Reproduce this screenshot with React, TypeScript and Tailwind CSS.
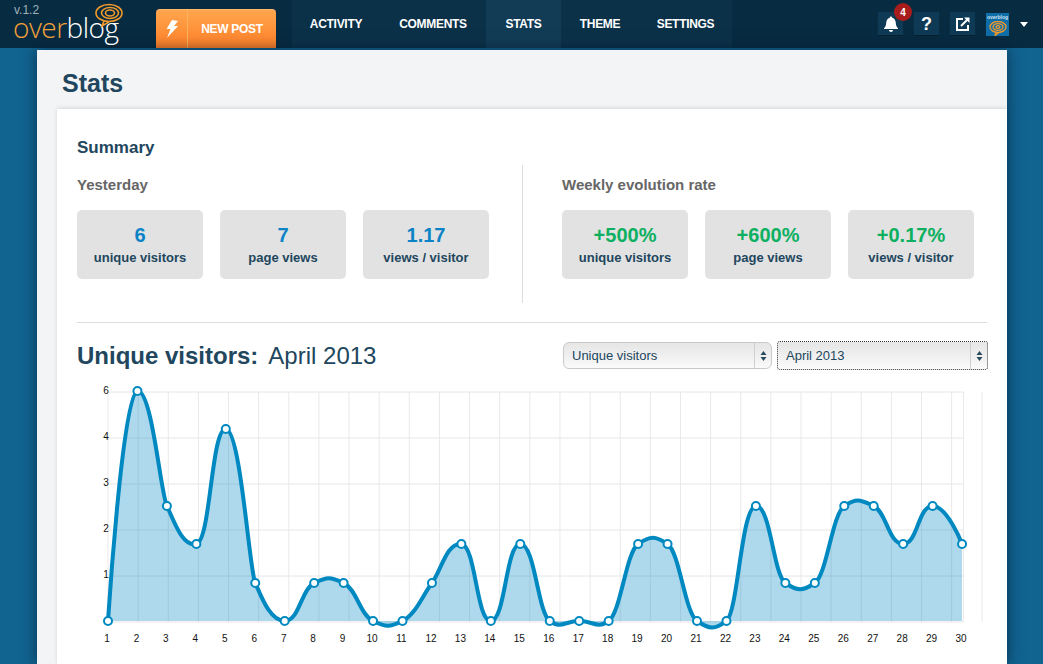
import React from "react";

const font = { fontFamily: '"Liberation Sans", Arial, sans-serif' };

const ys = [622, 392, 507, 545, 430, 584, 622, 584, 584, 622, 622, 584, 545, 622, 545, 622, 622, 622, 545, 545, 622, 622, 507, 584, 584, 507, 507, 545, 507, 545];
const xs = ys.map((_, i) => 108 + i * 29.45);

function anchors(p1x: number, p1y: number, p2x: number, p2y: number, p3x: number, p3y: number) {
  const l1 = (p2x - p1x) / 2;
  const l2 = (p3x - p2x) / 2;
  let a = Math.atan((p2x - p1x) / Math.abs(p2y - p1y));
  let b = Math.atan((p3x - p2x) / Math.abs(p2y - p3y));
  a = p1y < p2y ? Math.PI - a : a;
  b = p3y < p2y ? Math.PI - b : b;
  const alpha = Math.PI / 2 - ((a + b) % (Math.PI * 2)) / 2;
  return {
    x1: p2x - l1 * Math.sin(alpha + a),
    y1: p2y + l1 * Math.cos(alpha + a),
    x2: p2x + l2 * Math.sin(alpha + b),
    y2: p2y + l2 * Math.cos(alpha + b),
  };
}

function linePath() {
  let d = `M${xs[0]} ${ys[0]} C${xs[0]} ${ys[0]}`;
  for (let i = 1; i < xs.length - 1; i++) {
    const a = anchors(xs[i - 1], ys[i - 1], xs[i], ys[i], xs[i + 1], ys[i + 1]);
    d += ` ${a.x1} ${a.y1} ${xs[i]} ${ys[i]} ${a.x2} ${a.y2}`;
  }
  const n = xs.length - 1;
  d += ` ${xs[n]} ${ys[n]} ${xs[n]} ${ys[n]}`;
  return d;
}

function Chart() {
  const d = linePath();
  const gridX: number[] = [];
  for (let i = 0; i <= 28; i++) gridX.push(108 + i * 30.13);
  gridX.push(963.5, 982);
  const gridY = [393, 439, 485, 531, 577, 623];
  const yLabels: [string, number][] = [["6", 392], ["4", 438], ["3", 484], ["2", 530], ["1", 576]];
  return (
    <svg width="950" height="280" viewBox="60 384 950 280" className="block" style={font}>
      {gridX.map((x) => (
        <line key={x} x1={x} x2={x} y1={393} y2={623} stroke="#e9e9e9" strokeWidth="1" />
      ))}
      {gridY.map((y) => (
        <line key={y} x1={108} x2={963.5} y1={y} y2={y} stroke="#e6e6e6" strokeWidth="1" />
      ))}
      <path d={`${d} L962 622 L108 622 Z`} fill="#0a8ac6" fillOpacity="0.33" />
      <path d={d} fill="none" stroke="#0088c0" strokeWidth="4" />
      {xs.map((x, i) => (
        <circle key={i} cx={x} cy={ys[i]} r="4" fill="#fff" stroke="#0088c0" strokeWidth="2" />
      ))}
      {yLabels.map(([t, y]) => (
        <text key={t} x="106" y={y + 3} fontSize="10" textAnchor="middle" fill="#111">{t}</text>
      ))}
      {xs.map((x, i) => (
        <text key={i} x={x - 1} y="643" fontSize="10" textAnchor="middle" fill="#111">{i + 1}</text>
      ))}
    </svg>
  );
}

function Logo() {
  return (
    <div className="relative w-[140px] h-12 shrink-0">
      <span className="absolute left-[14px] top-[2px] text-[12px] leading-[16px] text-[#9fb0bb]">v.1.2</span>
      <span className="absolute left-[13px] top-[13px] text-[28px] leading-[28px] tracking-[-0.5px]" style={{ fontFamily: '"Open Sans", sans-serif', fontWeight: 300 }}>
        <span className="text-[#f4a13a]">over</span>
        <span className="text-white">blog</span>
      </span>
      <svg className="absolute left-[94px] top-[2px]" width="30" height="26" viewBox="0 0 30 26" fill="none" stroke="#f09a2c" strokeWidth="1.6">
        <ellipse cx="15" cy="11" rx="13" ry="8.5" />
        <ellipse cx="16" cy="11" rx="8.5" ry="5.5" />
        <ellipse cx="16" cy="11" rx="4.5" ry="3" />
        <path d="M10 19 L8 24 L15 20" />
      </svg>
    </div>
  );
}

function IconButton({ children }: { children: React.ReactNode }) {
  return (
    <div className="w-[25px] h-[24px] flex items-center justify-center bg-[#0f3a56] border-b border-[#04202f] shadow-[0_0_0_1px_#0a2c42]">
      {children}
    </div>
  );
}

function Header() {
  const items = [
    { t: "ACTIVITY", w: "w-[88px]" },
    { t: "COMMENTS", w: "w-[106px]" },
    { t: "STATS", w: "w-[75px]", active: true },
    { t: "THEME", w: "w-[78px]" },
    { t: "SETTINGS", w: "w-[93px]" },
  ];
  return (
    <div className="h-12 bg-[#072b41] flex items-end shrink-0">
      <Logo />
      <div className="ml-4 w-[120px] h-[39px] flex rounded-t-[4px] bg-gradient-to-b from-[#ffa64d] to-[#ff7f26] border-t border-[#ffb769]">
        <div className="w-[32px] flex items-center justify-center border-r border-[#ffb25f]">
          <svg width="14" height="18" viewBox="0 0 14 18" fill="#fff">
            <path d="M7 0 L13 1 L9 6 L13 6 L2 18 L5.5 9 L1.5 9 Z" />
          </svg>
        </div>
        <div className="flex-1 flex items-center justify-center text-[12px] font-bold text-white tracking-[-0.3px]">NEW POST</div>
      </div>
      <div className="ml-[16px] h-12 flex bg-[#0b3148]">
        {items.map((it) => (
          <div key={it.t} className={`${it.w} flex items-center justify-center text-[12px] font-bold text-white tracking-[-0.3px] ${it.active ? "bg-[#123c56]" : ""}`}>
            {it.t}
          </div>
        ))}
      </div>
      <div className="ml-auto h-12 flex items-center pr-[15px]">
        <div className="relative">
          <IconButton>
            <svg width="16" height="16" viewBox="0 0 16 16" fill="#fff">
              <path d="M8 0.5a1.2 1.2 0 0 1 1.2 1.3C11.8 2.4 12.6 4.5 12.8 7c.2 2.4.8 3.8 2.2 5.2v.8H1v-.8C2.400 10.800 3 9.400 3.200 7 3.400 4.500 4.200 2.400 6.800 1.800A1.200 1.200 0 0 1 8 .5zM6 14h4a2 2 0 0 1-4 0z" />
            </svg>
          </IconButton>
          <div className="absolute -right-[9px] -top-[9px] w-[18px] h-[18px] rounded-full bg-[#a81c1c] text-white text-[10px] font-bold flex items-center justify-center">4</div>
        </div>
        <div className="ml-[11px]">
          <IconButton><span className="text-white font-bold text-[18px] leading-none">?</span></IconButton>
        </div>
        <div className="ml-[11px] relative">
          <IconButton>
            <svg width="16" height="16" viewBox="0 0 16 16" fill="none" stroke="#fff" strokeWidth="2">
              <path d="M8 3H2v11h11V9" />
              <path d="M6 10 L13 3" />
              <path d="M9 1.500h5.500V7" fill="#fff" stroke="none" />
            </svg>
          </IconButton>
        </div>
        <div className="ml-[11px] w-[23px] h-[23px] bg-[#0f6ea8] flex flex-col items-center overflow-hidden">
          <span className="text-[5px] leading-[8px] font-bold text-[#cfe3ef]">overblog</span>
          <svg width="18" height="15" viewBox="0 0 18 15" fill="none" stroke="#f09a2c" strokeWidth="1.3">
            <ellipse cx="9" cy="6" rx="8" ry="5.5" />
            <ellipse cx="9" cy="6" rx="5" ry="3.400" />
            <ellipse cx="9" cy="6" rx="2" ry="1.400" />
            <path d="M7 11.500 L6 14.500 L10 11.500" />
          </svg>
        </div>
        <svg className="ml-[11px]" width="8" height="5" viewBox="0 0 8 5" fill="#fff"><path d="M0 0h8L4 5z" /></svg>
      </div>
    </div>
  );
}

function Stat({ value, label, color }: { value: string; label: string; color: string }) {
  return (
    <div className="w-[126px] h-[69px] rounded-[5px] bg-[#e2e2e2] flex flex-col items-center pt-[14px]">
      <div className={`text-[20px] leading-[22px] font-bold ${color}`}>{value}</div>
      <div className="mt-[3px] text-[13px] leading-[18px] font-bold text-[#21465d]">{label}</div>
    </div>
  );
}

function Select({ label, focused }: { label: string; focused?: boolean }) {
  return (
    <div className={`w-[209px] h-[27px] flex items-center bg-gradient-to-b from-[#e6e6e6] via-[#efefef] to-[#fbfbfb] ${focused ? "outline-1 outline-dotted outline-[#333] rounded-[2px]" : "border border-[#c9c9c9] rounded-[6px]"}`}>
      <span className="flex-1 pl-[8px] text-[13px] text-[#21465d]">{label}</span>
      <div className="w-[17px] h-full border-l border-[#cfcfcf] flex items-center justify-center">
        <svg width="7" height="12" viewBox="0 0 7 12" fill="#2a4a5f">
          <path d="M3.500 1L6.500 5H0.500zM3.500 11L0.500 7H6.500z" />
        </svg>
      </div>
    </div>
  );
}

export default function App() {
  return (
    <div className="w-[1043px] h-[664px] overflow-hidden flex flex-col bg-[#116390]" style={font}>
      <Header />
      <div className="flex-1 min-h-0 mt-[2px] ml-[37px] w-[970px] bg-[#f3f4f6] flex flex-col shadow-[0_0_14px_rgba(0,20,40,0.6)]">
        <div className="h-[59px] shrink-0 pl-[25px] pt-[18px] text-[25px] leading-[30px] font-bold text-[#21465d]">Stats</div>
        <div className="flex-1 min-h-0 ml-[20px] bg-white shadow-[0_-1px_4px_rgba(0,0,0,0.12)] overflow-hidden">
          <div className="pl-[20px] pr-[20px]">
            <div className="pt-[28px] text-[17px] leading-[22px] font-bold text-[#21465d]">Summary</div>
            <div className="flex mt-[6px] h-[158px] border-b border-[#dddddd]" >
              <div className="w-[446px] h-[138px] border-r border-[#dddddd] pt-[11px]">
                <div className="text-[15px] leading-[18px] font-bold text-[#666]">Yesterday</div>
                <div className="mt-[16px] flex gap-[17px]">
                  <Stat value="6" label="unique visitors" color="text-[#0b83c6]" />
                  <Stat value="7" label="page views" color="text-[#0b83c6]" />
                  <Stat value="1.17" label="views / visitor" color="text-[#0b83c6]" />
                </div>
              </div>
              <div className="pl-[39px] pt-[11px]">
                <div className="text-[15px] leading-[18px] font-bold text-[#666]">Weekly evolution rate</div>
                <div className="mt-[16px] flex gap-[17px]">
                  <Stat value="+500%" label="unique visitors" color="text-[#0cb060]" />
                  <Stat value="+600%" label="page views" color="text-[#0cb060]" />
                  <Stat value="+0.17%" label="views / visitor" color="text-[#0cb060]" />
                </div>
              </div>
            </div>
            <div className="flex items-center mt-[19px] h-[27px]">
              <div className="text-[24px] leading-[30px] text-[#21465d]">
                <span className="font-bold">Unique visitors:</span>
                <span className="ml-[10px]">April 2013</span>
              </div>
              <div className="ml-auto flex gap-[6px]">
                <Select label="Unique visitors" />
                <Select label="April 2013" focused />
              </div>
            </div>
          </div>
          <div className="-ml-[-3px] mt-[14px]">
            <Chart />
          </div>
        </div>
      </div>
    </div>
  );
}
